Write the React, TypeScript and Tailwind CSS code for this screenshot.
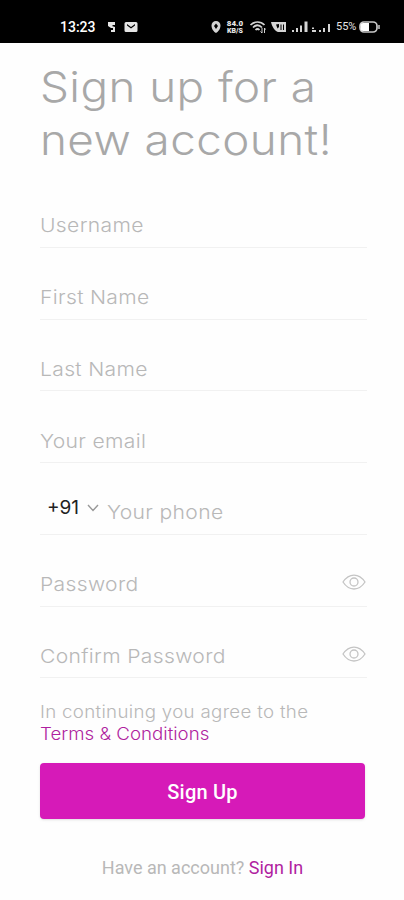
import { ReactNode } from "react";

const fields = ["Username", "First Name", "Last Name", "Your email"];

function StatusBar() {
  return (
    <div className="flex h-[43px] shrink-0 items-center bg-black pt-[11px] pl-[60px] text-white">
      <span className="w-[46px] font-['Roboto',sans-serif] text-[14px] font-medium">13:23</span>
      <svg className="h-4 w-[34px]" viewBox="0 0 34 16" fill="#e5e5e5">
        <path d="M2 3h7v3H7l-1 1 3 1v5H5v-2h2V9H5L2 7z" />
        <path fillRule="evenodd" d="M20 3h10a1.500 1.500 0 0 1 1.500 1.500v7a1.500 1.500 0 0 1-1.500 1.500H20a1.500 1.500 0 0 1-1.500-1.500v-7A1.500 1.500 0 0 1 20 3zm1 2v1.500l4 3 4-3V5l-4 3z" />
      </svg>
      <svg className="ml-[70px] h-4 w-[13px]" viewBox="0 0 13 16" fill="#d4d4d4">
        <path fillRule="evenodd" d="M6 2a4.500 4.500 0 0 1 4.500 4.500C10.500 10 8 13 6 14 4 13 1.500 10 1.500 6.500A4.500 4.500 0 0 1 6 2zm0 2.500L4 7l2 3 2-3z" />
      </svg>
      <div className="ml-[2px] w-5 text-center font-['Roboto',sans-serif] font-black text-neutral-200">
        <div className="text-[8px] leading-[8px]">84.0</div>
        <div className="text-[7px] leading-[7px]">KB/S</div>
      </div>
      <svg className="ml-1 h-4 w-[20px]" viewBox="0 0 20 16" fill="none" stroke="#d4d4d4" strokeWidth="1.700">
        <path d="M1.500 6c4-4 10-4 14 0M4 8.500c3-3 6-3 9 0M6.500 11c1.500-1.500 2.500-1.500 4 0" />
        <path d="M13 9v5m-1.500-1.500L13 14M15.500 14V9l1 1.500" strokeWidth="1" />
      </svg>
      <svg className="ml-[2px] h-4 w-4" viewBox="0 0 16 16" fill="#d4d4d4">
        <path fillRule="evenodd" d="M0 3h15v10H7C4 12 1 8 0 3zm5 2.500 1.500 4L8 8V5zm4.500 0V11h1V5.500zm2.500 0V11h1V5.500z" />
      </svg>
      <svg className="ml-1 h-4 w-[45px] shrink-0" viewBox="0 0 45 16" fill="#d4d4d4">
        <path d="M1 11h2v2H1zM5 9h2v4H5zM9 6.500h2V13H9zM13.500 2.500h3V13h-3zM21 8.500h2v1.500h-2zM21 11h4v2h-4zM28 11h2v2h-2zM32 9h2v4h-2zM37 5h2v8h-2z" />
      </svg>
      <span className="w-[23px] shrink-0 font-['Roboto',sans-serif] text-[11px] font-normal text-neutral-200">55%</span>
      <svg className="h-4 w-[22px] shrink-0" viewBox="0 0 22 16" fill="none">
        <rect x="1" y="3" width="17" height="10" rx="4" stroke="#c8c8c8" strokeWidth="1.700" />
        <path d="M4 4h6v8H4a2.500 2.500 0 0 1-2.500-2.500v-3A2.500 2.500 0 0 1 4 4z" fill="#fff" />
        <path d="M20 6v4" stroke="#c8c8c8" strokeWidth="1.500" />
      </svg>
    </div>
  );
}

function EyeIcon() {
  return (
    <svg className="mr-px mb-[6px] h-[18px] w-6" viewBox="0 0 24 18" fill="none" stroke="#c4c4c4" strokeWidth="1.300">
      <path d="M1 9c6-9.300 16-9.300 22 0-6 9.300-16 9.300-22 0z" />
      <circle cx="12" cy="9" r="4" />
    </svg>
  );
}

function Label({ children }: { children: ReactNode }) {
  return <span className="origin-left scale-x-[1.11] tracking-[0.3px] whitespace-nowrap">{children}</span>;
}

function Field({ children }: { children: ReactNode }) {
  return (
    <div className="flex h-[71.75px] w-[327px] items-end justify-between border-b border-[#f1f1f1] pb-[8.500px] text-[19px] leading-[24px] text-[#b8b8b8]">
      {children}
    </div>
  );
}

export default function App() {
  return (
    <div className="flex h-[900px] w-[404px] flex-col overflow-hidden bg-[#fefefe] font-['Inter',sans-serif] font-light">
      <StatusBar />
      <div className="flex flex-col pt-[17px] pl-10">
        <h1 className="h-[116px] w-[300px] origin-left scale-x-[1.09] text-[42px] leading-[53px] font-[260] whitespace-nowrap text-[#a8a8a8]">
          <span className="block tracking-[0.4px]">Sign up for a</span>
          <span className="block tracking-[0.4px]">new account!</span>
        </h1>
        {fields.map((label) => (
          <Field key={label}>
            <Label>{label}</Label>
          </Field>
        ))}
        <Field>
          <div className="flex items-end">
            <span className="mb-[5px] ml-[7px] w-[39px] text-[19px] font-normal text-[#222]">+91</span>
            <svg className="mr-[7px] mb-[11px] h-3 w-[14px]" viewBox="0 0 14 12" fill="none" stroke="#999" strokeWidth="1.400">
              <path d="M2 3l5 5.500L12 3" />
            </svg>
            <Label>Your phone</Label>
          </div>
        </Field>
        <Field>
          <Label>Password</Label>
          <EyeIcon />
        </Field>
        <Field>
          <Label>Confirm Password</Label>
          <EyeIcon />
        </Field>
        <p className="mt-[23px] w-[300px] origin-left scale-x-[1.1] text-[17px] leading-[22px] whitespace-nowrap text-[#b8b8b8]">
          <span className="block tracking-[0.28px]">In continuing you agree to the</span>
          <span className="block text-[#b01fa0]">Terms &amp; Conditions</span>
        </p>
        <button className="mt-[18px] h-[56px] w-[325px] rounded bg-[#d61ab8] pt-px font-['Roboto',sans-serif] text-[20px] font-medium tracking-[0.2px] text-white shadow-sm">
          Sign Up
        </button>
        <p className="mt-[38px] w-[325px] text-center font-['Roboto',sans-serif] text-[18px] leading-[22px] font-normal text-[#b8b8b8]">
          Have an account? <span className="text-[#b01fa0]">Sign In</span>
        </p>
      </div>
    </div>
  );
}
